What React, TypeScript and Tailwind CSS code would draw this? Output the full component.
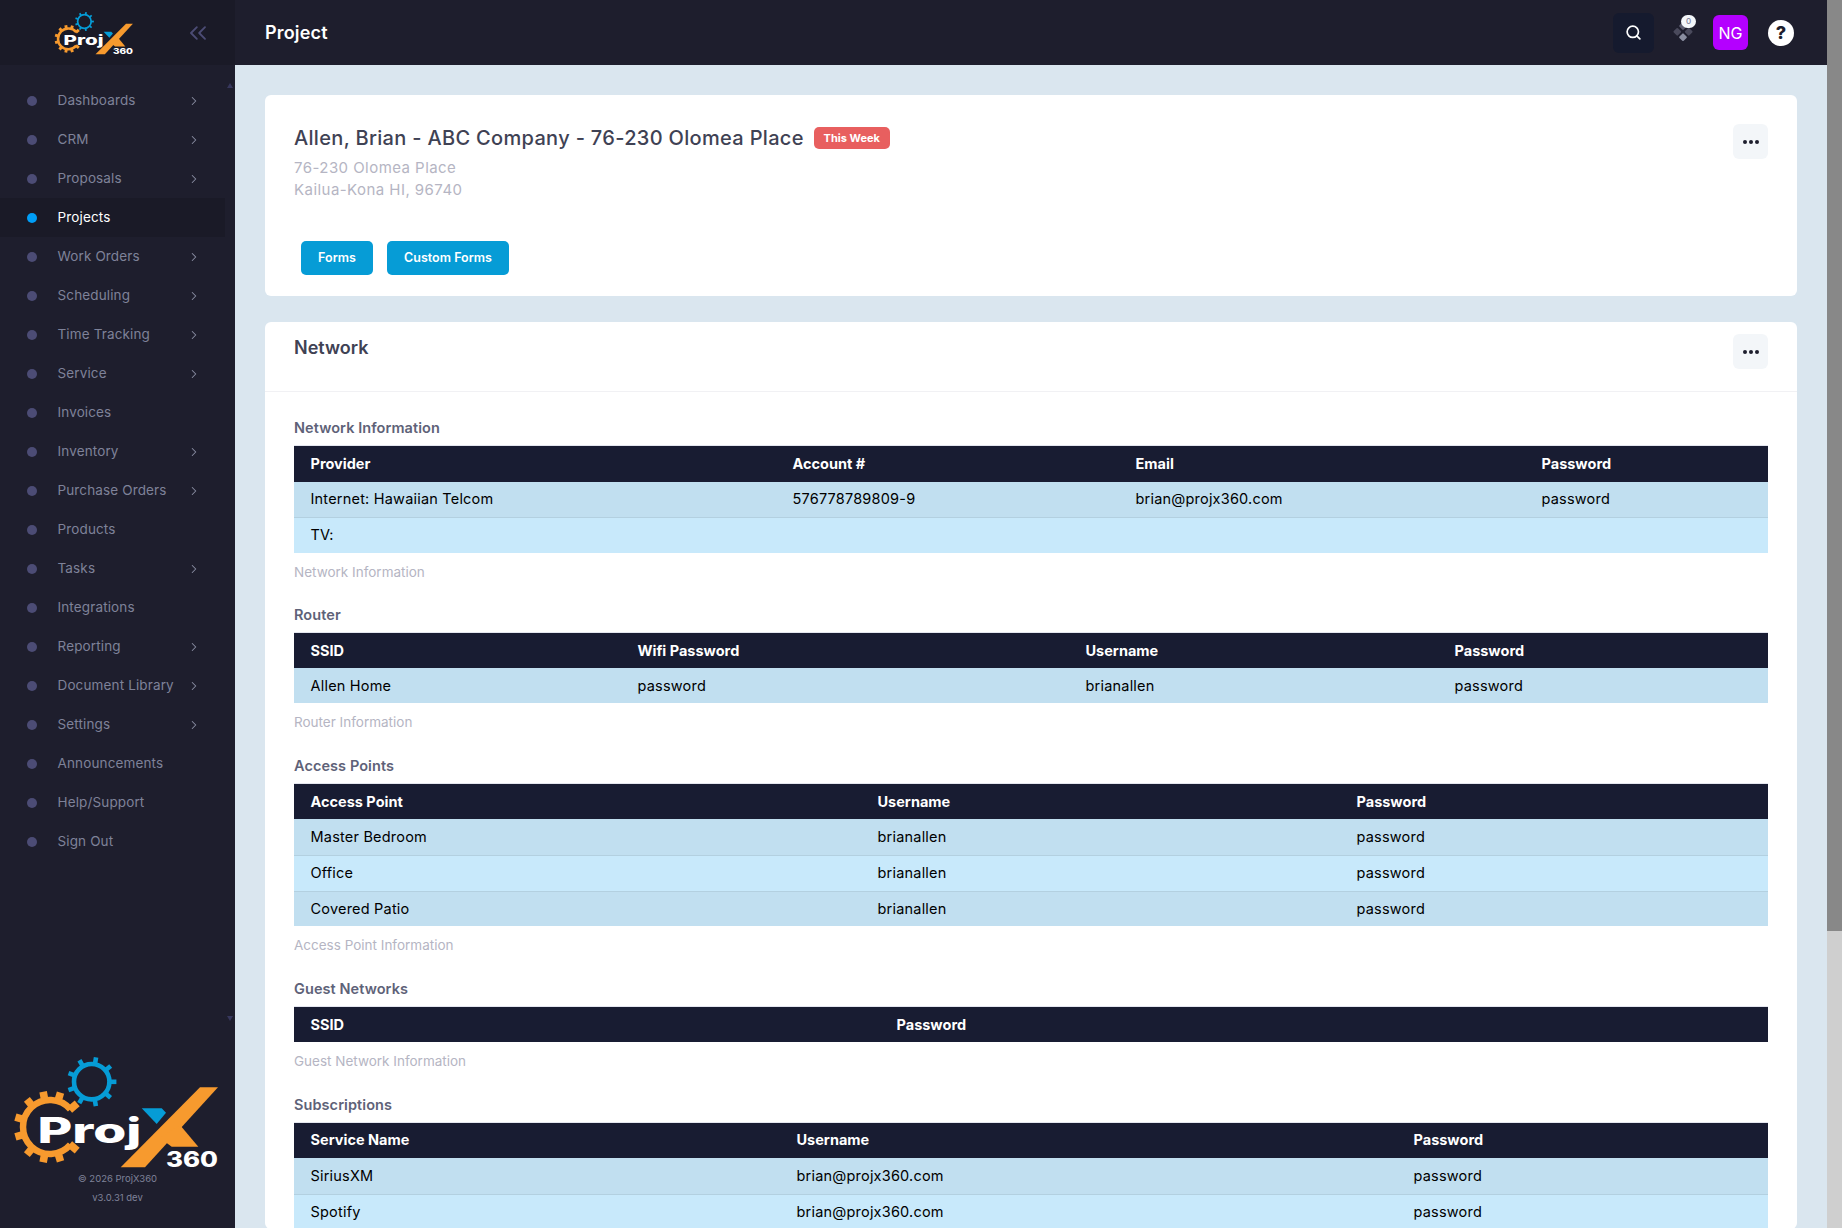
import React from "react";
import { ChevronRight, ChevronsLeft, Search } from "lucide-react";

const NAV = [
  { label: "Dashboards", more: true },
  { label: "CRM", more: true },
  { label: "Proposals", more: true },
  { label: "Projects", active: true },
  { label: "Work Orders", more: true },
  { label: "Scheduling", more: true },
  { label: "Time Tracking", more: true },
  { label: "Service", more: true },
  { label: "Invoices" },
  { label: "Inventory", more: true },
  { label: "Purchase Orders", more: true },
  { label: "Products" },
  { label: "Tasks", more: true },
  { label: "Integrations" },
  { label: "Reporting", more: true },
  { label: "Document Library", more: true },
  { label: "Settings", more: true },
  { label: "Announcements" },
  { label: "Help/Support" },
  { label: "Sign Out" },
];

const SECTIONS = [
  {
    title: "Network Information",
    caption: "Network Information",
    cols: ["w-[482px]", "w-[343px]", "w-[406px]", "w-[243px]"],
    head: ["Provider", "Account #", "Email", "Password"],
    rows: [
      ["Internet: Hawaiian Telcom", "576778789809-9", "brian@projx360.com", "password"],
      ["TV:", "", "", ""],
    ],
  },
  {
    title: "Router",
    caption: "Router Information",
    cols: ["w-[327px]", "w-[448px]", "w-[369px]", "w-[330px]"],
    head: ["SSID", "Wifi Password", "Username", "Password"],
    rows: [["Allen Home", "password", "brianallen", "password"]],
  },
  {
    title: "Access Points",
    caption: "Access Point Information",
    cols: ["w-[567px]", "w-[479px]", "w-[428px]"],
    head: ["Access Point", "Username", "Password"],
    rows: [
      ["Master Bedroom", "brianallen", "password"],
      ["Office", "brianallen", "password"],
      ["Covered Patio", "brianallen", "password"],
    ],
  },
  {
    title: "Guest Networks",
    caption: "Guest Network Information",
    cols: ["w-[586px]", "w-[888px]"],
    head: ["SSID", "Password"],
    rows: [],
  },
  {
    title: "Subscriptions",
    cols: ["w-[486px]", "w-[617px]", "w-[371px]"],
    head: ["Service Name", "Username", "Password"],
    rows: [
      ["SiriusXM", "brian@projx360.com", "password"],
      ["Spotify", "brian@projx360.com", "password"],
    ],
  },
];

const ORANGE_TEETH = [41, 73, 101, 130, 164, 196, 230, 259, 287, 319];
const BLUE_TEETH = [0, 40, 80, 120, 160, 200, 240, 280, 320];

const Logo = ({ className }: { className: string }) => (
  <svg viewBox="16 27 204 112" className={`overflow-visible ${className}`}>
    {/* orange gear */}
    <path d="M70.4 79.3 A27 27 0 1 0 70.4 114.7" fill="none" stroke="#f79a2e" strokeWidth="6.5" />
    {ORANGE_TEETH.map((a) => (
      <rect key={a} x="46.2" y="61" width="7.6" height="10" fill="#f79a2e" transform={`rotate(${90 - a} 50 97)`} />
    ))}
    {/* blue gear */}
    <circle cx="91.7" cy="51.7" r="17.7" fill="none" stroke="#069cd6" strokeWidth="4.6" />
    {BLUE_TEETH.map((a) => (
      <rect key={a} x="89.5" y="27" width="4.6" height="8" fill="#069cd6" transform={`rotate(${a + 10} 91.7 51.7)`} />
    ))}
    {/* x mark */}
    <polygon points="200,57.3 218,57.3 145,137.3 120.7,137.3" fill="#f79a2e" />
    <polygon points="180,95 198.3,116.7 171.7,116.7 160,108" fill="#f79a2e" />
    <polygon points="141.7,78.3 161.7,78.3 166,82.7 156.7,94" fill="#069cd6" />
    <text
      x="37.5"
      y="112.7"
      fill="#fff"
      fontSize="35"
      fontWeight="800"
      textLength="104"
      lengthAdjust="spacingAndGlyphs"
      className="font-['Inter',sans-serif]"
    >
      Proj
    </text>
    <text
      x="166"
      y="137.3"
      fill="#fff"
      fontSize="21"
      fontWeight="800"
      textLength="52"
      lengthAdjust="spacingAndGlyphs"
      className="font-['Inter',sans-serif]"
    >
      360
    </text>
  </svg>
);

const Sidebar = () => (
  <aside className="relative flex h-full w-[235px] shrink-0 flex-col bg-[#1e1e2d]">
    <div className="flex h-[65px] shrink-0 items-center justify-between bg-[#1a1a27] pl-[55px] pr-[23px] pt-[1px]">
      <Logo className="block h-[43px] w-[79px]" />
      <ChevronsLeft size={28} strokeWidth={1.6} className="text-[#4c4c75]" />
    </div>

    <nav className="pt-[16px]">
      {NAV.map((item) => (
        <div
          key={item.label}
          className={`flex h-[39px] w-[225px] items-center pl-[27px] pr-[24px] text-[13.5px] ${
            item.active ? "bg-[#1a1a27] text-white" : "text-[#7e8299]"
          }`}
        >
          <span className={`h-[10px] w-[10px] rounded-full ${item.active ? "bg-[#009ef7]" : "bg-[#4c4c75]"}`} />
          <span className="ml-[20.5px] flex-1 tracking-[0.01em]">{item.label}</span>
          {item.more && <ChevronRight size={14} strokeWidth={1.8} className="text-[#8a8ea3]" />}
        </div>
      ))}
    </nav>

    {/* scroll arrows of the menu */}
    <span className="absolute left-[227px] top-[83px] h-0 w-0 border-x-[3.5px] border-b-[5px] border-x-transparent border-b-[#37375c]" />
    <span className="absolute left-[227px] top-[1016px] h-0 w-0 border-x-[3.5px] border-t-[5px] border-x-transparent border-t-[#37375c]" />

    <div className="mt-auto pb-[21px] text-center text-[9.5px] leading-[19px] text-[#7e8299]">
      <Logo className="ml-[16px] block h-[112px] w-[204px]" />
      <div>© 2026 ProjX360</div>
      <div>v3.0.31 dev</div>
    </div>
  </aside>
);

const Topbar = () => (
  <header className="flex h-[65px] shrink-0 items-center justify-between bg-[#1e1e2d] pl-[30px] pr-[33px]">
    <h1 className="text-[18px] font-semibold tracking-[0.01em] text-white">Project</h1>
    <div className="flex items-center">
      <button className="flex h-[40px] w-[41px] items-center justify-center rounded-md bg-[#151a2e] text-white">
        <Search size={17} strokeWidth={2.4} />
      </button>
      <div className="relative ml-[17px] h-[40px] w-[24px]">
        <svg viewBox="0 0 24 24" className="absolute left-0 top-[8px] h-[24px] w-[24px]">
          <rect x="9" y="2" width="6" height="6" rx="1" fill="#5b5b6e" transform="rotate(45 12 5)" />
          <rect x="3.3" y="7.8" width="6" height="6" rx="1" fill="#4a4a5c" transform="rotate(45 6.3 10.8)" />
          <rect x="14.7" y="7.8" width="6" height="6" rx="1" fill="#4a4a5c" transform="rotate(45 17.7 10.8)" />
          <rect x="9" y="13.2" width="6" height="6" rx="1" fill="#8a8ea0" transform="rotate(45 12 16.2)" />
        </svg>
        <span className="absolute left-[10px] top-[2px] flex h-[13px] w-[15px] items-center justify-center rounded-full bg-[#f3f6f9] text-[8px] font-medium text-[#7e8299]">
          0
        </span>
      </div>
      <div className="ml-[18px] flex h-[35px] w-[35px] items-center justify-center rounded-md bg-[#b400ff] text-[16px] text-white">
        NG
      </div>
      <div className="ml-[20px] flex h-[26px] w-[26px] items-center justify-center rounded-full bg-white text-[18px] font-extrabold text-[#1e1e2d]">
        ?
      </div>
    </div>
  </header>
);

const MoreButton = () => (
  <button className="flex h-[35px] w-[35px] shrink-0 items-center justify-center gap-[2px] rounded-md bg-[#f3f6f9]">
    <span className="h-[4px] w-[4px] rounded-full bg-[#1e1e2d]" />
    <span className="h-[4px] w-[4px] rounded-full bg-[#1e1e2d]" />
    <span className="h-[4px] w-[4px] rounded-full bg-[#1e1e2d]" />
  </button>
);

const Section = ({ s }: { s: (typeof SECTIONS)[number] }) => (
  <section>
    <h4 className="mb-[7px] text-[14.5px] font-semibold leading-[21px] tracking-[0.005em] text-[#5e6278]">{s.title}</h4>
    <table className="w-full table-fixed border-t border-[#e4e6ef] text-[14.5px]">
      <colgroup>
        {s.cols.map((c, i) => (
          <col key={i} className={c} />
        ))}
      </colgroup>
      <thead>
        <tr className="h-[36px] bg-[#181c32] text-left text-white">
          {s.head.map((h) => (
            <th key={h} className="py-0 pl-[16.5px] pr-[16px] font-bold">
              {h}
            </th>
          ))}
        </tr>
      </thead>
      <tbody>
        {s.rows.map((row, i) => {
          const last = i === s.rows.length - 1;
          return (
            <tr
              key={i}
              className={`${i % 2 === 0 ? "bg-[#c1dff0]" : "bg-[#c8e9fb]"} ${
                last ? "h-[35px]" : "h-[36px] border-b border-[#b3d0e0]"
              }`}
            >
              {row.map((cell, j) => (
                <td key={j} className="py-0 pl-[16.5px] pr-[16px] tracking-[0.014em] text-black">
                  {cell}
                </td>
              ))}
            </tr>
          );
        })}
      </tbody>
    </table>
    {s.caption && <p className="mb-[22.4px] mt-[9px] text-[13.5px] leading-[20px] text-[#b5b5c3]">{s.caption}</p>}
  </section>
);

export default function App() {
  return (
    <div className="flex h-screen w-full overflow-hidden bg-[#dae6ef] font-['Inter',sans-serif]">
      <Sidebar />

      <div className="flex min-w-0 flex-1 flex-col">
        <Topbar />
        <main className="flex-1 overflow-hidden px-[30px] pt-[30px]">
          <div className="rounded-md bg-white px-[29px] pb-[21px] pt-[29px]">
            <div className="flex items-start justify-between">
              <div>
                <div className="flex h-[28px] items-center">
                  <h2 className="text-[20px] font-medium tracking-[0.016em] text-[#3f4254]">
                    Allen, Brian - ABC Company - 76-230 Olomea Place
                  </h2>
                  <span className="ml-[10px] flex h-[22px] w-[76px] items-center justify-center rounded-[5px] bg-[#e85f5f] text-[11px] font-bold text-white">
                    This Week
                  </span>
                </div>
                <div className="mt-[5px] text-[15px] leading-[22px] tracking-[0.03em] text-[#b5b5c3]">
                  <div>76-230 Olomea Place</div>
                  <div>Kailua-Kona HI, 96740</div>
                </div>
              </div>
              <MoreButton />
            </div>
            <div className="ml-[7px] mt-[40px] flex gap-[14px]">
              <button className="flex h-[34px] w-[72px] items-center justify-center rounded-[5px] bg-[#069cd6] text-[12.5px] font-semibold text-white">
                Forms
              </button>
              <button className="flex h-[34px] w-[122px] items-center justify-center rounded-[5px] bg-[#069cd6] text-[12.5px] font-semibold text-white">
                Custom Forms
              </button>
            </div>
          </div>

          <div className="mt-[26px] rounded-md bg-white">
            <div className="flex h-[70px] items-start justify-between border-b border-[#f1f1f4] px-[29px] pt-[12px]">
              <h3 className="mt-[3px] text-[18px] font-semibold leading-[22px] text-[#3f4254]">Network</h3>
              <MoreButton />
            </div>
            <div className="px-[29px] pt-[25px]">
              {SECTIONS.map((s) => (
                <Section key={s.title} s={s} />
              ))}
            </div>
          </div>
        </main>
      </div>

      {/* page scrollbar */}
      <div className="h-full w-[15px] shrink-0 bg-[#cfcfcf]">
        <div className="h-[931px] bg-[#888888]" />
      </div>
    </div>
  );
}
